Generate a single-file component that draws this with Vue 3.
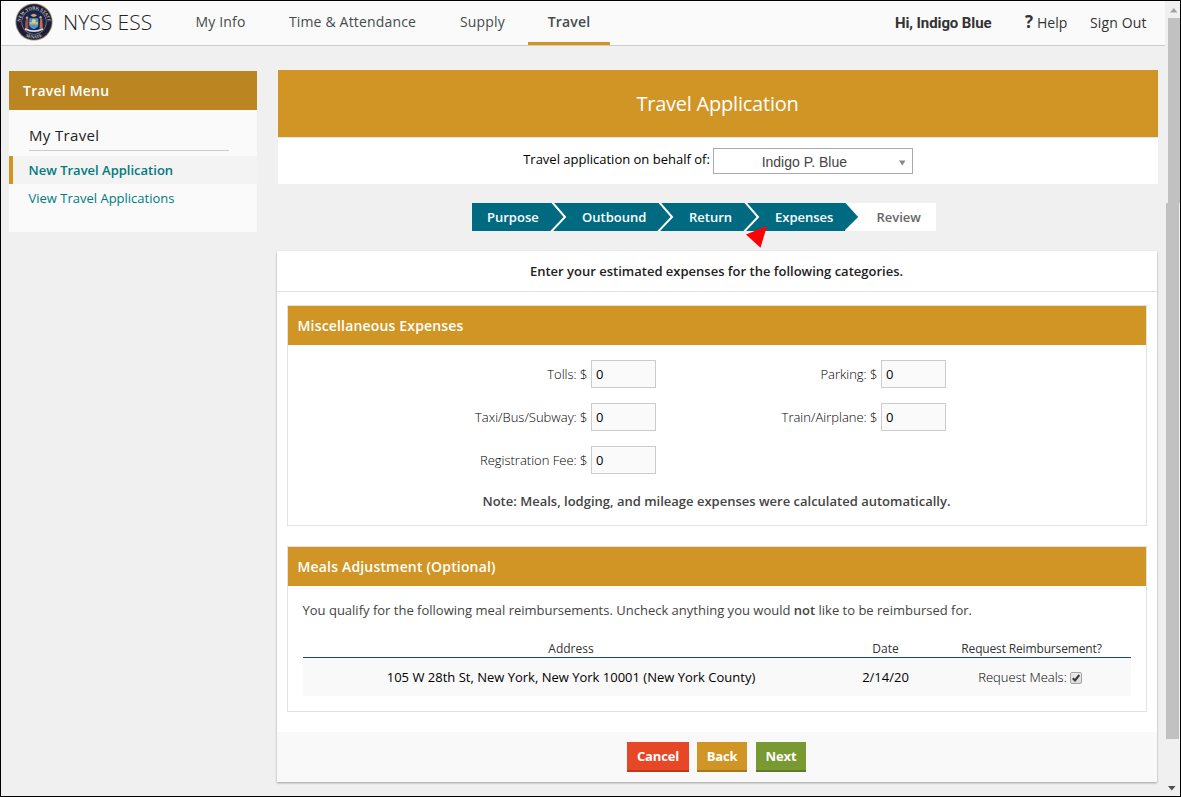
<script setup>
import { ref } from 'vue'

const nav = [
  { label: 'My Info', cls: 'my-info' },
  { label: 'Time & Attendance', cls: 'time' },
  { label: 'Supply', cls: 'supply' },
  { label: 'Travel', cls: 'travel' },
]
const steps = [
  { label: 'Purpose', cls: 'first' },
  { label: 'Outbound', cls: 'outbound' },
  { label: 'Return', cls: 'return' },
  { label: 'Expenses', cls: 'expenses' },
]
const fields = ref([
  { label: 'Tolls: $', value: '0' },
  { label: 'Parking: $', value: '0' },
  { label: 'Taxi/Bus/Subway: $', value: '0' },
  { label: 'Train/Airplane: $', value: '0' },
  { label: 'Registration Fee: $', value: '0' },
])
</script>

<template>
  <div class="window">
    <div class="page">
      <header class="topbar">
        <svg class="seal" viewBox="0 0 38 38">
          <circle cx="19" cy="19" r="18.6" fill="#9a8a66" />
          <circle cx="19" cy="19" r="17.7" fill="#1b1d3a" />
          <circle cx="19" cy="19" r="12.6" fill="#a08c60" />
          <circle cx="19" cy="19" r="11.9" fill="#182452" />
          <path id="arcTop" d="M5.3 20a13.7 13.7 0 0 1 27.4 0" fill="none" />
          <path id="arcBottom" d="M2.500 19a16.500 16.500 0 0 0 33 0" fill="none" />
          <text class="seal-text"><textPath href="#arcTop" startOffset="50%" text-anchor="middle">NEW YORK STATE</textPath></text>
          <text class="seal-text"><textPath href="#arcBottom" startOffset="50%" text-anchor="middle">SENATE</textPath></text>
          <path d="M14.3 15.2h9v6.6q0 3-4.5 4.4-4.500-1.400-4.500-4.400z" fill="#4f96c8" />
          <path d="M14.600 19h8.400v2.500H14.600z" fill="#b9b98c" />
          <circle cx="18.800" cy="18" r="1.900" fill="#e8cf70" />
          <path d="M15.500 12.300q3.300-3 6.600 0l-2 1.500h-2.600z" fill="#cda469" />
          <path d="M11.500 15.500l1.800 1v9h-3.300l.5-7z" fill="#a9503c" />
          <path d="M25.300 14.500l2 2 .5 9h-3.300z" fill="#c96d42" />
          <circle cx="12" cy="14.800" r="1.200" fill="#d2a67d" />
          <circle cx="25.600" cy="14.300" r="1.200" fill="#d2a67d" />
          <path d="M10.500 25q8.500 4.500 17 0l.7 1.800q-9.200 4.500-18.400 0z" fill="#d9dce6" />
        </svg>
        <div class="brand"><span class="nyss">NYSS</span> <span class="ess">ESS</span></div>
        <nav class="nav">
          <a v-for="n in nav" :key="n.label" :class="['nav-item', n.cls]"><span>{{ n.label }}</span></a>
        </nav>
        <div class="user">Hi, Indigo Blue</div>
        <div class="help"><b>?</b><span>Help</span></div>
        <div class="signout">Sign Out</div>
      </header>

      <div class="columns">
        <aside class="sidebar">
          <h3>Travel Menu</h3>
          <h4>My Travel</h4>
          <a class="link active">New Travel Application</a>
          <a class="link">View Travel Applications</a>
        </aside>

        <main class="main">
          <h1>Travel Application</h1>
          <div class="behalf">
            <label>Travel application on behalf of:</label>
            <div class="select">
              <span>Indigo P. Blue</span>
              <svg viewBox="0 0 7 6"><path d="M0 .5h6.500L3.300 5.500z" fill="#888" /></svg>
            </div>
          </div>

          <div class="steps">
            <div v-for="s in steps" :key="s.label" :class="['step', s.cls]">
              <span>{{ s.label }}</span>
              <svg class="tip" viewBox="0 0 18 28">
                <path d="M0 0h1.500l12.700 14L0 28z" fill="#006b80" />
                <path v-if="s.cls !== 'expenses'" d="M2-1L15 14 .3 29.500" fill="none" stroke="#fff" stroke-width="2" />
              </svg>
            </div>
            <div class="step review"><span>Review</span></div>
            <svg class="pointer" viewBox="0 0 22 22"><path d="M0 8.500L21 0l-6.500 21.700z" fill="#f00" /></svg>
          </div>

          <section class="panel">
            <p class="intro"><span>Enter your estimated expenses for the following categories.</span></p>

            <div class="card misc">
              <h2><span>Miscellaneous Expenses</span></h2>
              <div class="fields">
                <label v-for="f in fields" :key="f.label" class="field">
                  <span>{{ f.label }}</span>
                  <input v-model="f.value" type="text" />
                </label>
              </div>
              <p class="note"><span>Note: Meals, lodging, and mileage expenses were calculated automatically.</span></p>
            </div>

            <div class="card meals">
              <h2><span>Meals Adjustment (Optional)</span></h2>
              <p class="qualify">You qualify for the following meal reimbursements. Uncheck anything you would <b>not</b> like to be reimbursed for.</p>
              <div class="row head">
                <span>Address</span><span>Date</span><span class="req-head">Request Reimbursement?</span>
              </div>
              <div class="row data">
                <span class="addr">105 W 28th St, New York, New York 10001 (New York County)</span>
                <span>2/14/20</span>
                <span class="req">
                  <em>Request Meals:</em>
                  <svg class="check" viewBox="0 0 12 12">
                    <defs>
                      <linearGradient id="cb" x1="0" y1="0" x2="0" y2="1">
                        <stop offset="0" stop-color="#eee" /><stop offset="1" stop-color="#dcdcdc" />
                      </linearGradient>
                    </defs>
                    <rect x=".5" y=".5" width="11" height="11" rx="1.500" fill="url(#cb)" stroke="#a4a4a4" />
                    <path d="M2.800 6.300l2.200 2.200L9.300 3" fill="none" stroke="#3c3c3c" stroke-width="2.100" />
                  </svg>
                </span>
              </div>
            </div>

            <footer class="actions">
              <button class="cancel">Cancel</button>
              <button class="back">Back</button>
              <button class="next">Next</button>
            </footer>
          </section>
        </main>
      </div>
    </div>

    <div class="scrollbar">
      <svg class="up" viewBox="0 0 8 5"><path d="M0 4.500L3.800 0l3.700 4.500z" fill="#a3a3a3" /></svg>
      <div class="thumb-a"></div>
      <div class="thumb-b"></div>
      <svg class="down" viewBox="0 0 8 5"><path d="M0 0h7.500L3.800 4.500z" fill="#505050" /></svg>
    </div>
  </div>
</template>

<style>
body {
  margin: 0;
  overflow: hidden;
}
</style>

<style scoped>
* {
  box-sizing: border-box;
}
.window {
  width: 1181px;
  height: 797px;
  border: 1px solid #000;
  background: #f0f0f0;
  display: flex;
  font-family: "Open Sans", "Noto Sans", sans-serif;
  font-size: 13px;
  color: #000;
  white-space: nowrap;
}
h1, h2, h3, h4, p {
  margin: 0;
}
.page {
  width: 1164px;
}
.topbar {
  height: 45px;
  background: #fafafa;
  border-bottom: 1px solid #ccc;
  display: flex;
  font-size: 14px;
  line-height: 20px;
  color: #444b4b;
}
.seal {
  width: 38px;
  height: 38px;
  margin: 2px 0 0 14px;
}
.seal-text {
  font-family: "Liberation Serif", serif;
  font-size: 4.5px;
  font-weight: 700;
  fill: #c9c9d2;
}
.brand {
  margin: 6px 0 0 10px;
  width: 104px;
  font-size: 21px;
  line-height: 30px;
  color: #222;
  font-weight: 300;
}
.nyss {
  font-weight: 350;
  color: #222;
}
.nav {
  display: flex;
  letter-spacing: 0.17px;
}
.nav-item {
  display: flex;
  justify-content: center;
  padding: 11px 0 0;
  height: 44px;
}
.my-info { width: 93px; margin-left: 7px; }
.time { width: 171px; }
.supply { width: 83px; margin-left: 3px; }
.travel {
  width: 82px;
  margin-left: 4px;
  font-weight: 600;
  border-bottom: 3px solid #d09525;
}
.user {
  margin: 12px 0 0 285px;
  width: 130px;
  font-family: Roboto, sans-serif;
  font-size: 15px;
  font-weight: 700;
  letter-spacing: -0.1px;
  color: #333;
}
.help {
  margin-top: 12px;
  width: 65px;
  display: flex;
  gap: 3px;
  color: #333;
}
.help b {
  width: 9px;
  font-size: 17px;
  line-height: 18px;
}
.signout {
  margin-top: 12px;
  letter-spacing: 0.15px;
  color: #333;
}
.columns {
  display: flex;
  gap: 20px;
  padding: 24px 0 0 8px;
}
.sidebar {
  width: 248px;
  height: 161px;
  margin-top: 1px;
  background: #fafafa;
}
.sidebar h3 {
  height: 39px;
  padding-left: 14px;
  background: #bb8521;
  color: #fff;
  font-size: 14px;
  font-weight: 600;
  letter-spacing: 0.22px;
  line-height: 39px;
}
.sidebar h4 {
  margin: 11px 28px 5px 20px;
  height: 30px;
  border-bottom: 1px solid #ccc;
  font-size: 15px;
  font-weight: 500;
  letter-spacing: 0.35px;
  line-height: 28px;
  color: #222;
}
.link {
  display: block;
  height: 28px;
  line-height: 28px;
  padding-left: 19.500px;
  color: #007a80;
}
.link.active {
  padding-left: 15.500px;
  border-left: 4px solid #d09525;
  background: #f3f3f3;
  font-weight: 600;
}
.main {
  width: 881px;
}
.main h1 {
  height: 68px;
  margin-left: 1px;
  width: 880px;
  padding-right: 1px;
  background: #d09525;
  border-bottom: 1px solid #e2e6ea;
  color: #fff;
  font-size: 20px;
  font-weight: 400;
  letter-spacing: -0.22px;
  line-height: 68px;
  text-align: center;
}
.behalf {
  margin-left: 1px;
  width: 880px;
  height: 46px;
  background: #fff;
  display: flex;
  justify-content: center;
}
.behalf label {
  line-height: 18px;
  margin: 12px 3px 0 0;
}
.select {
  width: 200px;
  height: 26px;
  margin-top: 10px;
  border: 1px solid #aaa;
  display: flex;
  align-items: center;
  font-family: "Liberation Sans", Arial, sans-serif;
  font-size: 14px;
  color: #444;
}
.select span {
  width: 181px;
  text-align: center;
  padding-top: 2px;
}
.select svg {
  width: 7px;
  height: 6px;
  margin: 3px 0 0 4px;
}
.steps {
  position: relative;
  display: flex;
  margin: 19px 0 0 195px;
  width: 464px;
  height: 28px;
}
.step {
  position: relative;
  padding-left: 30px;
  background: #006b80;
  color: #fff;
  font-weight: 600;
  line-height: 28px;
}
.first { width: 80px; padding-left: 15px; z-index: 5; }
.outbound { width: 107px; z-index: 4; }
.return { width: 86px; z-index: 3; }
.expenses { width: 100px; z-index: 2; }
.review { width: 91px; padding-left: 31.500px; background: #fff; color: #666; }
.tip {
  position: absolute;
  top: 0;
  left: calc(100% - 1px);
  width: 18px;
  height: 28px;
}
.first .tip, .outbound .tip, .return .tip {
  left: calc(100% - 2px);
}
.pointer {
  position: absolute;
  left: 274px;
  top: 23px;
  width: 22px;
  height: 22px;
  z-index: 6;
}
.panel {
  margin-top: 20px;
  width: 880px;
  height: 531px;
  background: #fff;
  box-shadow: 0 1px 2px rgba(0, 0, 0, 0.35);
}
.intro {
  height: 41px;
  padding-right: 1px;
  border-bottom: 1px solid #e0e3e5;
  text-align: center;
  font-weight: 600;
  line-height: 41px;
  color: #222;
}
.card {
  width: 860px;
  margin-left: 10px;
  border: 1px solid #e0e3e5;
}
.card h2 {
  height: 39px;
  padding-left: 9.500px;
  background: #d09525;
  color: #fff;
  font-size: 14px;
  font-weight: 600;
  letter-spacing: 0.17px;
  line-height: 39px;
}
.misc {
  margin-top: 13px;
  height: 221px;
}
.fields {
  display: grid;
  grid-template-columns: 290px 290px;
  gap: 15px 0;
  padding: 15px 0 0 78px;
}
.field {
  height: 28px;
  display: flex;
  justify-content: flex-end;
  align-items: center;
  font-weight: 300;
  color: #000;
}
.field input {
  width: 65px;
  height: 28px;
  margin-left: 3.500px;
  padding: 0 4px;
  border: 1px solid #ccc;
  background: #fafafa;
  font: 400 13px "Open Sans", sans-serif;
  color: #000;
  outline: none;
}
.note {
  margin-top: 18px;
  padding-right: 1px;
  text-align: center;
  line-height: 18px;
  font-weight: 600;
  color: #444;
}
.meals {
  margin-top: 20px;
  height: 166px;
}
.qualify {
  margin: 15px 0 0 14.500px;
  line-height: 18px;
  color: #444;
}
.qualify b {
  font-weight: 600;
}
.row {
  display: grid;
  grid-template-columns: 536px 93px 199px;
  margin: 0 15px;
  text-align: center;
}
.head {
  margin-top: 20px;
  height: 19px;
  border-bottom: 1px solid #16505e;
  font-size: 12px;
  line-height: 20px;
  color: #333;
}
.req-head {
  letter-spacing: -0.15px;
}
.data {
  height: 38px;
  background: #f9f9f9;
  line-height: 38px;
}
.req {
  display: flex;
  justify-content: center;
  align-items: center;
  gap: 3px;
  padding-right: 3px;
  font-weight: 300;
}
.req em {
  font-style: normal;
}
.check {
  width: 12px;
  height: 12px;
  margin-top: 1px;
}
.actions {
  margin-top: 20px;
  height: 50px;
  background: #f9f9f9;
  display: flex;
  padding: 10px 0 0 350px;
}
.actions button {
  height: 30px;
  width: 50px;
  padding: 0;
  border: 0;
  border-bottom: 2px solid;
  color: #fff;
  font: 700 13px/28px "Open Sans", sans-serif;
  letter-spacing: -0.15px;
}
.actions .cancel {
  width: 62px;
  background: #e64727;
  border-color: #c53517;
}
.actions .back {
  margin-left: 8px;
  background: #d09525;
  border-color: #a6771d;
}
.actions .next {
  margin-left: 9px;
  background: #799933;
  border-color: #5f7a26;
}
.scrollbar {
  position: relative;
  width: 15px;
  height: 795px;
}
.up, .down {
  position: absolute;
  left: 5px;
  width: 8px;
  height: 5px;
}
.up { top: 7px; }
.down { left: 3px; top: 785px; }
.thumb-a {
  position: absolute;
  left: 3px;
  top: 17px;
  width: 12px;
  height: 185px;
  background: #c1c1c1;
}
.thumb-b {
  position: absolute;
  left: 1px;
  top: 202px;
  width: 13px;
  height: 536px;
  background: #c1c1c1;
}
</style>
